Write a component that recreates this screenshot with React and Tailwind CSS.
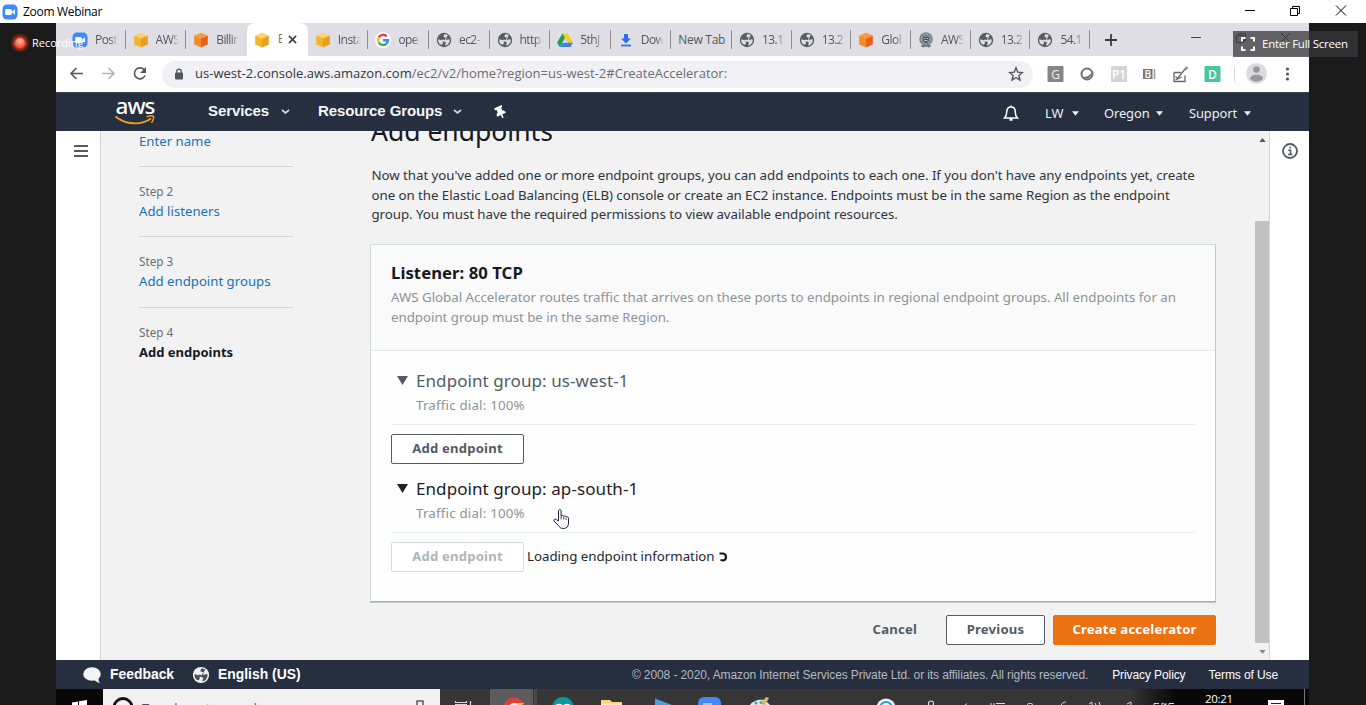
import React from "react";
import { FaThumbtack } from "react-icons/fa";

const noto = "font-['Noto_Sans',sans-serif]";
const seg = "font-['Open_Sans',sans-serif]";

function ZoomLogo({ className }) {
  return (
    <svg viewBox="0 0 16 16" className={className}>
      <rect x="0.5" y="0.5" width="15" height="15" rx="4.5" fill="#3f8af8" />
      <rect x="3.2" y="5" width="6.6" height="6" rx="1.2" fill="#fff" />
      <path d="M10.3 7.2 13 5.2v5.6l-2.7-2z" fill="#fff" />
    </svg>
  );
}
function Cube({ a, b, c }) {
  return (
    <svg viewBox="0 0 16 16" className="size-4">
      <path d="M8 .8 14.8 3.6 8 6.4 1.2 3.6z" fill={a} />
      <path d="M1.2 3.6 8 6.4V15.4L1.2 12.6z" fill={b} />
      <path d="M14.8 3.6 8 6.4V15.4L14.8 12.6z" fill={c} />
    </svg>
  );
}
const Yellow = () => <Cube a="#fbd36b" b="#f5b32e" c="#e8a11c" />;
const Orange = () => <Cube a="#fb9a3c" b="#f58a2a" c="#e8601c" />;
function Globe({ className = "size-4", fill = "#5a5d62", bg = "#dfdee5" }) {
  return (
    <svg viewBox="0 0 16 16" className={className}>
      <circle cx="8" cy="8" r="7.2" fill={fill} />
      <path d="M8.200 2.200C9.800 2 11 2.600 12 3.400L10.600 4.800 11 6 9.400 6.600 8.600 8.200 6.800 7.600 5.600 8.200 2.300 7.200C1.900 9 2.600 10.800 3.800 12L5.800 12.800 7 11.200 6.600 9.600 8.800 9.800 10 10.800 9.200 12.600 9.600 13.700 11.800 12.600 13.600 10 13.800 7.400 12 7.200 10.600 8.200 9.800 7.200 11 6 9 5.400 7.400 4.600z" fill={bg} />
    </svg>
  );
}
function Google() {
  return (
    <svg viewBox="0 0 16 16" className="size-4">
      <circle cx="8" cy="8" r="8" fill="#fff" />
      <g fill="none" strokeWidth="2.4">
        <path d="M11.700 4.300A5 5 0 0 0 3.700 5.500" stroke="#ea4335" />
        <path d="M3.700 5.500a5 5 0 0 0 0 5" stroke="#fbbc05" />
        <path d="M3.700 10.500a5 5 0 0 0 7.600 1.300" stroke="#34a853" />
        <path d="M11.300 11.800A5 5 0 0 0 13 8.300H8" stroke="#4285f4" />
      </g>
    </svg>
  );
}
function Drive() {
  return (
    <svg viewBox="0 0 16 16" className="size-4">
      <path d="M5.4 1.5h5.2L16 10.7h-5.2z" fill="#fbc918" />
      <path d="M5.4 1.5 8 6 2.7 15 0 10.7z" fill="#1fa05a" />
      <path d="M5.3 10.7H16L13.4 15H2.7z" fill="#4080ee" />
    </svg>
  );
}
function Download() {
  return (
    <svg viewBox="0 0 16 16" className="size-4">
      <path d="M6 2h4v4.6h3L8 11.4 3 6.6h3z" fill="#2b72e8" />
      <rect x="3" y="12.6" width="10" height="1.8" fill="#2b72e8" />
    </svg>
  );
}
function Emblem() {
  return (
    <svg viewBox="0 0 16 16" className="size-4">
      <circle cx="8" cy="7" r="6.8" fill="#7b838f" />
      <circle cx="8" cy="7" r="4.8" fill="none" stroke="#b4b9c2" strokeDasharray="2 1.2" />
      <path d="M5.4 5h5.2v4H9.4v2H6.6V9H5.4z" fill="#4b525d" />
      <path d="M6 6.5h1.4M8.6 6.5H10M6.5 8.5h3" stroke="#d5d8de" strokeWidth=".9" />
      <path d="M3 14h10M6 12l-1 3.4M10 12l1 3.4" stroke="#68707c" strokeWidth="1.4" />
    </svg>
  );
}

const tabs = [
  { icon: <ZoomLogo className="size-4" />, t: "Post" },
  { icon: <Yellow />, t: "AWS" },
  { icon: <Orange />, t: "Billin" },
  { icon: <Yellow />, t: "E", active: true },
  { icon: <Yellow />, t: "Insta" },
  { icon: <Google />, t: "ope" },
  { icon: <Globe />, t: "ec2-" },
  { icon: <Globe />, t: "http" },
  { icon: <Drive />, t: "5thJ" },
  { icon: <Download />, t: "Dow" },
  { icon: null, t: "New Tab" },
  { icon: <Globe />, t: "13.1" },
  { icon: <Globe />, t: "13.2" },
  { icon: <Orange />, t: "Glol" },
  { icon: <Emblem />, t: "AWS" },
  { icon: <Globe />, t: "13.2" },
  { icon: <Globe />, t: "54.1" },
];

function Tab({ icon, t, active, sep, narrow }) {
  if (active)
    return (
      <div className="flex h-[33px] w-[61px] shrink-0 items-center rounded-t-lg bg-white pl-[7px]">
        <span className="shrink-0">{icon}</span>
        <span className="ml-2 w-[4px] shrink-0 overflow-hidden text-[12.5px] whitespace-nowrap text-[#777]">{t}</span>
        <svg viewBox="0 0 10 10" className="ml-[6px] size-[9px] shrink-0"><path d="M1 1l8 8M9 1l-8 8" stroke="#3c3d42" strokeWidth="1.7" /></svg>
      </div>
    );
  return (
    <div className={"flex h-[33px] shrink-0 items-center " + (narrow ? "w-[59.7px]" : "w-[60.6px]")}>
      <div className={"flex h-[19px] w-full items-center border-r pl-[7px] " + (sep ? "border-[#8e8e94]" : "border-transparent")}>
        {icon && <span className="mr-[7px] shrink-0">{icon}</span>}
        <span className={"overflow-hidden text-[12px] leading-[18px] whitespace-nowrap text-[#55565b] " + (icon ? "w-[23px] tracking-[-0.55px] [mask-image:linear-gradient(90deg,#000_65%,transparent)]" : "w-[48px] tracking-[-0.3px]")}>{t}</span>
      </div>
    </div>
  );
}

function Caret({ className }) {
  return <svg viewBox="0 0 8 5" className={className}><path d="M0 0h8L4 5z" fill="currentColor" /></svg>;
}
function Chevron() {
  return <svg viewBox="0 0 9 6" className="h-[6px] w-[9px]"><path d="M1 1l3.5 3L8 1" fill="none" stroke="#d5d9df" strokeWidth="1.7" /></svg>;
}

function TitleBar() {
  return (
    <div className="flex h-[23px] items-center bg-white">
      <ZoomLogo className="ml-[2px] size-4" />
      <span className={`ml-[5px] text-[12px] tracking-[-0.3px] text-black ${seg}`}>Zoom Webinar</span>
      <svg viewBox="0 0 110 14" className="mr-[14px] mb-[4px] ml-auto h-[14px] w-[110px]" fill="none" stroke="#000">
        <path d="M3 7.500h10" />
        <path d="M48.500 5.500h7v7h-7zM50.500 5.500v-2h7v7h-2" />
        <path d="M94 2.500l10 10M104 2.500l-10 10" />
      </svg>
    </div>
  );
}

function Toolbar() {
  return (
    <div className="flex h-9 items-center bg-white">
      <svg viewBox="0 0 80 16" className="ml-[13px] h-4 w-20" fill="none" strokeWidth="1.6">
        <path d="M14 7.5H2M7.5 2 2 7.5 7.5 13" stroke="#55565b" />
        <path d="M33 7.5h12M39.500 2 45 7.500 39.500 13" stroke="#b5b5ba" />
        <path d="M75.500 4.300A5.500 5.500 0 1 0 76 9.500" stroke="#55565b" />
        <path d="M77 1v6h-6z" fill="#55565b" />
      </svg>
      <div className="ml-[13px] flex h-[27px] w-[871px] items-center rounded-full bg-[#f1f1f5] pl-[12px]">
        <svg viewBox="0 0 10 12" className="h-[12px] w-[10px]"><rect x="1" y="4.500" width="8" height="7" rx="1" fill="#55565b" /><path d="M2.800 5V3.300a2.200 2.200 0 0 1 4.400 0V5" fill="none" stroke="#55565b" strokeWidth="1.300" /></svg>
        <span className={`mb-px ml-[11px] text-[13px] tracking-[0.01px] whitespace-nowrap text-[#6b6d72] ${seg}`}>
          <span className="text-[#35363b]">us-west-2.console.aws.amazon.com</span>/ec2/v2/home?region=us-west-2#CreateAccelerator:
        </span>
        <svg viewBox="0 0 16 16" className="mr-[9px] ml-auto size-4"><path d="M8 1.800l1.800 4.300 4.600.4-3.500 3 1.100 4.500L8 11.600 4 14l1.100-4.500-3.500-3 4.600-.4z" fill="none" stroke="#55565b" strokeWidth="1.400" /></svg>
      </div>
      <svg viewBox="0 0 265 24" className="ml-[7px] h-6 w-[265px] shrink-0 font-['Open_Sans',sans-serif]">
        <rect x="7.500" y="4" width="16" height="16" rx="1" fill="#858585" />
        <text x="15.500" y="16.500" fontSize="12" fill="#eee" textAnchor="middle">G</text>
        <circle cx="47" cy="12" r="5.500" fill="#fff" stroke="#707075" strokeWidth="2" />
        <path d="M42 15a6 6 0 0 0 10-5c-2 4-6 5.500-10 5z" fill="#707075" />
        <rect x="71" y="4" width="16" height="16" fill="#d8d3d4" />
        <text x="79" y="16.500" fontSize="12" fill="#fff" textAnchor="middle" fontWeight="600">P1</text>
        <rect x="103" y="7" width="9.500" height="10" fill="#77787b" />
        <text x="107.700" y="15.700" fontSize="10" fill="#fff" textAnchor="middle" fontWeight="600">B</text>
        <path d="M114.500 7v10" stroke="#999" strokeWidth="1.500" />
        <g fill="none" stroke="#66676a" strokeWidth="1.300"><path d="M134 10.500v9h11v-6M134 10.500h7M135.500 14.500l2 2 8-10" /><path d="M144.500 8l3-3" strokeWidth="2.500" stroke="#96979a" /><path d="M135.500 18l6-3" /></g>
        <rect x="164.500" y="4" width="16" height="16" rx="1" fill="#48c79c" />
        <text x="172.500" y="16.500" fontSize="12" fill="#fff" textAnchor="middle" fontWeight="600">D</text>
        <path d="M194.500 4.500v15" stroke="#d7d7db" />
        <circle cx="216.500" cy="11.500" r="10.500" fill="#dcdce0" />
        <circle cx="216.500" cy="7.500" r="3.300" fill="#99999d" />
        <path d="M210 17c0-5.600 13-5.600 13 0a9 9 0 0 1-13 0z" fill="#99999d" />
        <g fill="#55565b"><circle cx="247.500" cy="7" r="1.600" /><circle cx="247.500" cy="12" r="1.600" /><circle cx="247.500" cy="17" r="1.600" /></g>
      </svg>
    </div>
  );
}

function AwsNav() {
  return (
    <div className="flex h-[39px] items-center border-t border-[#3a424f] bg-[#252f3f] text-white">
      <div className="ml-[58px] flex w-[42px] flex-col items-center">
        <span className="h-[17px] font-['Noto_Sans',sans-serif] text-[22.500px] leading-[14px] font-medium tracking-[-1px]">aws</span>
        <svg viewBox="0 0 42 11" className="-mt-px h-[11px] w-[42px]" fill="none" stroke="#f59a1e" strokeWidth="1.900"><path d="M1.500 1.500c10 8.500 26 9 35.500 2" /><path d="M32.500 1.800c3-1 6-1.200 6.800-.3.700 1-.3 4-1.800 6.300" strokeWidth="1.500" /></svg>
      </div>
      <div className="mb-[1px] flex items-center font-['Liberation_Sans',sans-serif] text-[15px] font-bold tracking-[-0.1px] text-[#f5f6f8]">
        <span className="ml-[52px] w-[73px]">Services</span><Chevron />
        <span className="ml-[28px] w-[135px]">Resource Groups</span><Chevron />
      </div>
      <FaThumbtack className="ml-[32px] size-[13px] -rotate-[25deg] text-white" />
      <svg viewBox="0 0 16 18" className="mt-[2px] ml-auto h-[18px] w-4" fill="none" stroke="#fff" strokeWidth="1.500"><path d="M8 1.500v1M1.500 14h13c-2-2-2.300-3.500-2.300-6.500C12.200 4.500 10.500 3 8 3S3.800 4.500 3.800 7.500C3.800 10.500 3.500 12 1.500 14z" /><path d="M6.500 15.500h3" strokeWidth="2.500" /></svg>
      <div className={`mt-[3px] mr-[58px] ml-[26px] flex items-center text-[12.900px] text-[#eceef1] ${noto}`}>
        <span className="w-[27px]">LW</span><Caret className="h-[5px] w-[7px]" />
        <span className="ml-[25px] w-[52px] tracking-[-0.1px]">Oregon</span><Caret className="h-[5px] w-[7px]" />
        <span className="ml-[26px] w-[55px] tracking-[-0.1px]">Support</span><Caret className="h-[5px] w-[7px]" />
      </div>
    </div>
  );
}

function Step({ n, label, current, last }) {
  return (
    <div className={"h-[70.4px] " + (last ? "" : "border-b border-[#d2d5d8]")}>
      <div className="h-[17px] pt-[16px] text-[11.700px] leading-[17px] text-[#687078]">Step {n}</div>
      <div className={"pt-[17px] leading-[20px] whitespace-nowrap " + (current ? "text-[13px] font-bold text-[#16191f]" : "text-[13.2px] text-[#1673b4]")}>{label}</div>
    </div>
  );
}

const btn = "flex h-[30px] items-center justify-center rounded-[2px] border pb-px text-[13.1px] font-bold tracking-[0.2px] whitespace-nowrap";

function Group({ name, dark }) {
  return (
    <div className="h-[59px] border-b border-[#eaeded]">
      <div className={"flex h-[29px] items-center pl-[6px] text-[17px] tracking-[0.08px] " + (dark ? "text-[#1d2028]" : "text-[#545b64]")}>
        <svg viewBox="0 0 11 9" className="mr-[8px] h-[9px] w-[11px]"><path d="M0 0h11L5.500 9z" fill="currentColor" /></svg>
        <span>Endpoint group: {name}</span>
      </div>
      <div className="pl-[25px] text-[13.3px] leading-[20px] tracking-[0.2px] text-[#8b9499]">Traffic dial: 100%</div>
    </div>
  );
}

function Console() {
  return (
    <div className={`flex h-[529px] bg-[#f2f2f3] ${noto}`}>
      <aside className="w-[45px] shrink-0 border-r border-[#d3d3d6] bg-white">
        <svg viewBox="0 0 14 12" className="mt-[14px] ml-[18px] h-[12px] w-[14px]"><path d="M0 1h14M0 6h14M0 11h14" stroke="#545b64" strokeWidth="2" /></svg>
      </aside>
      <main className="flex h-[529px] flex-1 overflow-hidden">
        <nav className="ml-[38px] w-[154px] shrink-0">
          <div className="h-[36px] border-b border-[#d2d5d8] text-[13.2px] leading-[21px] text-[#1673b4]">Enter name</div>
          <Step n="2" label="Add listeners" />
          <Step n="3" label="Add endpoint groups" />
          <Step n="4" label="Add endpoints" current last />
        </nav>
        <section className="ml-[77px] w-[846px] shrink-0">
          <h1 className="-mt-[17px] ml-px h-[52px] text-[26.500px] leading-[34px] text-[#16191f]">Add endpoints</h1>
          <p className="ml-[1.500px] h-[78px] text-[13.3px] leading-[19.600px] tracking-[-0.055px] whitespace-nowrap text-[#30343a]">
            Now that you've added one or more endpoint groups, you can add endpoints to each one. If you don't have any endpoints yet, create<br />
            one on the Elastic Load Balancing (ELB) console or create an EC2 instance. Endpoints must be in the same Region as the endpoint<br />
            group. You must have the required permissions to view available endpoint resources.
          </p>
          <div className="h-[358px] border border-[#d5dbdb] border-r-[#c4c6c9] border-b-[#aaafb4] bg-[#fefefe] shadow-[0_1px_0_#c2c4c7]">
            <header className="h-[106px] border-b border-[#e5e8e8] bg-[#fafafa] px-[20px] pt-[15px]">
              <h2 className="text-[16.700px] leading-[26px] font-bold tracking-[0.05px] text-[#16191f]">Listener: 80 TCP</h2>
              <p className="pt-[2px] text-[13.3px] leading-[19.600px] tracking-[-0.02px] whitespace-nowrap text-[#8b9499]">
                AWS Global Accelerator routes traffic that arrives on these ports to endpoints in regional endpoint groups. All endpoints for an<br />
                endpoint group must be in the same Region.
              </p>
            </header>
            <div className="px-[20px] pt-[15px]">
              <Group name="us-west-1" />
              <button className={`mt-[9px] mb-[10px] w-[133px] border-[#545b64] bg-white text-[#545b64] ${btn}`}>Add endpoint</button>
              <Group name="ap-south-1" dark />
              <div className="mt-[9px] flex items-center">
                <button className={`w-[133px] border-[#d5dbdb] bg-white text-[#aeb6b9] ${btn}`}>Add endpoint</button>
                <span className="ml-[3px] text-[13.3px] tracking-[-0.02px] whitespace-nowrap text-[#24272d]">Loading endpoint information</span>
                <svg viewBox="0 0 10 10" className="ml-[3px] size-[10px]"><path d="M1.500 1.500H5a3.500 3.500 0 0 1 3 3.500 3.500 3.500 0 0 1-3 3.500L2.500 8" fill="none" stroke="#16191f" strokeWidth="2.200" /></svg>
              </div>
            </div>
          </div>
          <div className="mt-[13px] flex items-center justify-end">
            <span className="mr-[29px] pb-px text-[13.1px] font-bold tracking-[0.2px] text-[#545b64]">Cancel</span>
            <button className={`mr-[8px] w-[99px] border-[#545b64] bg-white text-[#545b64] ${btn}`}>Previous</button>
            <button className={`w-[163px] border-[#ec7211] bg-[#ec7211] text-white ${btn}`}>Create accelerator</button>
          </div>
        </section>
        <div className="ml-auto flex w-[14px] flex-col items-center text-[#8c8c90]">
          <Caret className="mt-[7px] h-[4px] w-[7px] rotate-180 text-[#55565b]" />
          <div className="mt-[79px] h-[422px] w-full bg-[#c1c1c3]" />
          <Caret className="mt-[7px] h-[4px] w-[7px]" />
        </div>
      </main>
      <aside className="w-[40px] shrink-0 border-l border-[#d8d8db] bg-white">
        <svg viewBox="0 0 16 16" className="mt-[12px] ml-[12px] size-4" fill="none" stroke="#545b64"><circle cx="8" cy="8" r="7" strokeWidth="1.800" /><path d="M6.300 7.300h2.200v4M6 11.500h4.500M7.400 4.600h1.500" strokeWidth="1.600" /></svg>
      </aside>
    </div>
  );
}

function Footer() {
  return (
    <div className="flex h-[29px] items-center bg-[#252f3f] font-['Liberation_Sans',sans-serif] text-white">
      <svg viewBox="0 0 18 16" className="ml-[27px] h-4 w-[18px]"><ellipse cx="9" cy="7" rx="8.800" ry="6.800" fill="#f3f4f6" /><path d="M11 12c1 2 3 3.600 6 3.800-1.500-1.500-1.500-3-1.500-5z" fill="#f3f4f6" /></svg>
      <span className="ml-[9px] w-[82px] text-[13.900px] font-bold">Feedback</span>
      <Globe className="size-[18px]" fill="#f3f4f6" bg="#4a5260" />
      <span className="ml-[8px] text-[13.900px] font-bold">English (US)</span>
      <span className="ml-auto text-[12px] tracking-[-0.1px] whitespace-nowrap text-[#b4bac2]">© 2008 - 2020, Amazon Internet Services Private Ltd. or its affiliates. All rights reserved.</span>
      <span className="ml-[24px] text-[12px] tracking-[-0.1px] whitespace-nowrap">Privacy Policy</span>
      <span className="mr-[31px] ml-[23px] text-[12px] tracking-[-0.1px] whitespace-nowrap">Terms of Use</span>
    </div>
  );
}

function Taskbar() {
  return (
    <div className={`flex h-4 overflow-hidden bg-[#373637] ${seg}`}>
      <div className="w-[47px] shrink-0 bg-[#080808]">
        <svg viewBox="0 0 47 16" className="h-4 w-[47px]"><path d="M16 13.500l6-1V16h-6zM23 12.300l8-1.200V16h-8z" fill="#fff" /></svg>
      </div>
      <div className="flex h-4 w-[337px] shrink-0 overflow-hidden bg-[#f1f1f1]">
        <svg viewBox="0 0 24 16" className="ml-[8px] h-4 w-6"><circle cx="12" cy="18.500" r="9" fill="none" stroke="#111" strokeWidth="2.800" /></svg>
        <span className="ml-[7px] h-4 pt-[10px] text-[13px] leading-[18px] whitespace-nowrap text-[#555]">Type here to search</span>
        <svg viewBox="0 0 10 16" className="mr-[15px] ml-auto h-4 w-[10px]"><rect x="2" y="12" width="6" height="10" fill="none" stroke="#444" strokeWidth="1.300" /></svg>
      </div>
      <svg viewBox="0 0 340 16" className="h-4 w-[340px] shrink-0">
        <path d="M15.500 12v1.500h11V12M15 15.500h12M30.500 12v4" fill="none" stroke="#d8d8d8" strokeWidth="1.200" />
        <rect x="50" width="43" height="16" fill="#5c5c5c" /><rect x="94" width="3" height="16" fill="#4a4a4a" />
        <circle cx="74" cy="19" r="10.500" fill="#dd4338" /><path d="M74 14h10.500l-4 3H73z" fill="#f4c633" /><circle cx="74" cy="19" r="5" fill="#f4f4f4" />
        <circle cx="123" cy="19" r="11" fill="#0b979c" /><path d="M116 17a4 4 0 0 1 6 0M124 17a4 4 0 0 1 6 0" stroke="#fff" strokeWidth="2" fill="none" />
        <path d="M161 11h9l2 2h10v3h-21z" fill="#f4d777" /><path d="M161 14.500h21V16h-21z" fill="#fbe9a5" />
        <path d="M215 9.500l17 6.500h-17z" fill="#4c9de2" />
        <rect x="258" y="8" width="23" height="16" rx="6" fill="#4388f3" /><path d="M263 15h9" stroke="#fff" />
        <path d="M310 16c2-4 9-6 15-5l5 5z" fill="#dfe9ed" /><path d="M320 15l6-7 3 1-4 7z" fill="#d8b27a" /><circle cx="316" cy="14" r="1.500" fill="#39a0c8" /><circle cx="321" cy="13.500" r="1.500" fill="#6aaa3a" />
      </svg>
      <div className="flex flex-1 bg-linear-to-r from-[#373637] from-66% to-[#080808] to-75%">
        <svg viewBox="0 0 345 16" className="ml-[59px] h-4 w-[345px] shrink-0" fill="none" stroke="#dcdcdc">
          <circle cx="47" cy="19" r="9.500" fill="#f5f5f5" stroke="none" /><circle cx="47" cy="19" r="6" stroke="#24a2d8" strokeWidth="2" />
          <circle cx="92" cy="14.500" r="2.500" strokeWidth="1.200" />
          <path d="M126 16l2-1.500M152 14v2M155 14v2M157 14.500h9M188 15.500c2-1.500 4-1.500 6 0M222 16c1-2 3-3 5-3M250 15l3-2v3M256 14l1 2M260 13l1 3M288 15l4-2v3" />
          <path d="M315 16v-1.500h5M323 16v-2l4 2v-2M335 14.500h-5V16" />
        </svg>
      </div>
    </div>
  );
}

export default function App() {
  return (
    <div className="relative h-[705px] w-[1366px] overflow-hidden bg-[#1a1a1a]">
      <TitleBar />
      <div className="ml-[56px] h-[682px] w-[1253px] overflow-hidden">
        <div className={`flex h-[33px] items-center bg-[#dfdee5] pl-[9px] ${seg}`}>
          {tabs.map((x, i) => <Tab key={i} {...x} sep={i !== 2} narrow={i > 10} />)}
          <svg viewBox="0 0 12 12" className="ml-[15px] size-3"><path d="M6 0v12M0 6h12" stroke="#3b3c40" strokeWidth="1.800" /></svg>
          <svg viewBox="0 0 110 14" className="mb-[4px] ml-[71px] h-[14px] w-[110px]" fill="none" stroke="#444"><path d="M3 6.500h10" /><path d="M48.500 4.500h7v7h-7zM50.500 4.500v-2h7v7h-2M93 2l9 9M102 2l-9 9" /></svg>
        </div>
        <Toolbar />
        <AwsNav />
        <Console />
        <Footer />
        <Taskbar />
      </div>
      <div className={`absolute top-[33px] left-[10px] flex items-center text-white ${seg}`}>
        <span className="flex size-5 items-center justify-center rounded-full bg-[radial-gradient(circle,#e8452f_30%,#7a2412_50%,transparent_70%)]"><span className="size-[10px] rounded-full bg-[radial-gradient(circle_at_50%_30%,#ffb5a8,#f2553f_70%)]" /></span>
        <span className="ml-[2px] text-[11px]">Recording</span>
      </div>
      <div className={`absolute top-[31px] left-[1233px] flex h-[26px] w-[125px] items-center bg-[#38383b]/75 text-white ${seg}`}>
        <svg viewBox="0 0 14 14" className="ml-[8px] size-[14px]" fill="none" stroke="#fff" strokeWidth="2"><path d="M1 4.500V1h3.500M9.500 1H13v3.500M13 9.500V13H9.500M4.500 13H1V9.500" /></svg>
        <span className="ml-[7px] text-[11.5px] tracking-[-0.25px] whitespace-nowrap">Enter Full Screen</span>
      </div>
      <div className={`absolute top-[691px] left-[1205px] text-[11.5px] leading-[15px] tracking-[-0.3px] text-white ${seg}`}>20:21</div>
      <svg viewBox="0 0 40 16" className="absolute top-[689px] left-[1268px] h-4 w-10"><path d="M0 11h16v5H0z" fill="#fff" /><path d="M3 14.500h10" stroke="#222" /><path d="M36.500 0v16" stroke="#777" /></svg>
      <svg viewBox="0 0 17 22" className="absolute top-[508px] left-[553px] h-[22px] w-[17px]"><path d="M5.500 13V3c0-2 2.600-2 2.600 0v5c.6-1 2.400-.8 2.600.4.800-.8 2.200-.5 2.400.6 1-.6 2.400 0 2.400 1.300V15c0 3-1.500 5.500-5 5.500-3 0-4-1.200-5.500-3.500L1 13c-.8-1.500 1-2.500 2.200-1.500z" fill="#fff" stroke="#1f2238" strokeWidth="1" /><path d="M8.100 8v3.500M10.700 9v2.500M13.100 10v2" stroke="#1f2238" strokeWidth=".8" /></svg>
    </div>
  );
}
